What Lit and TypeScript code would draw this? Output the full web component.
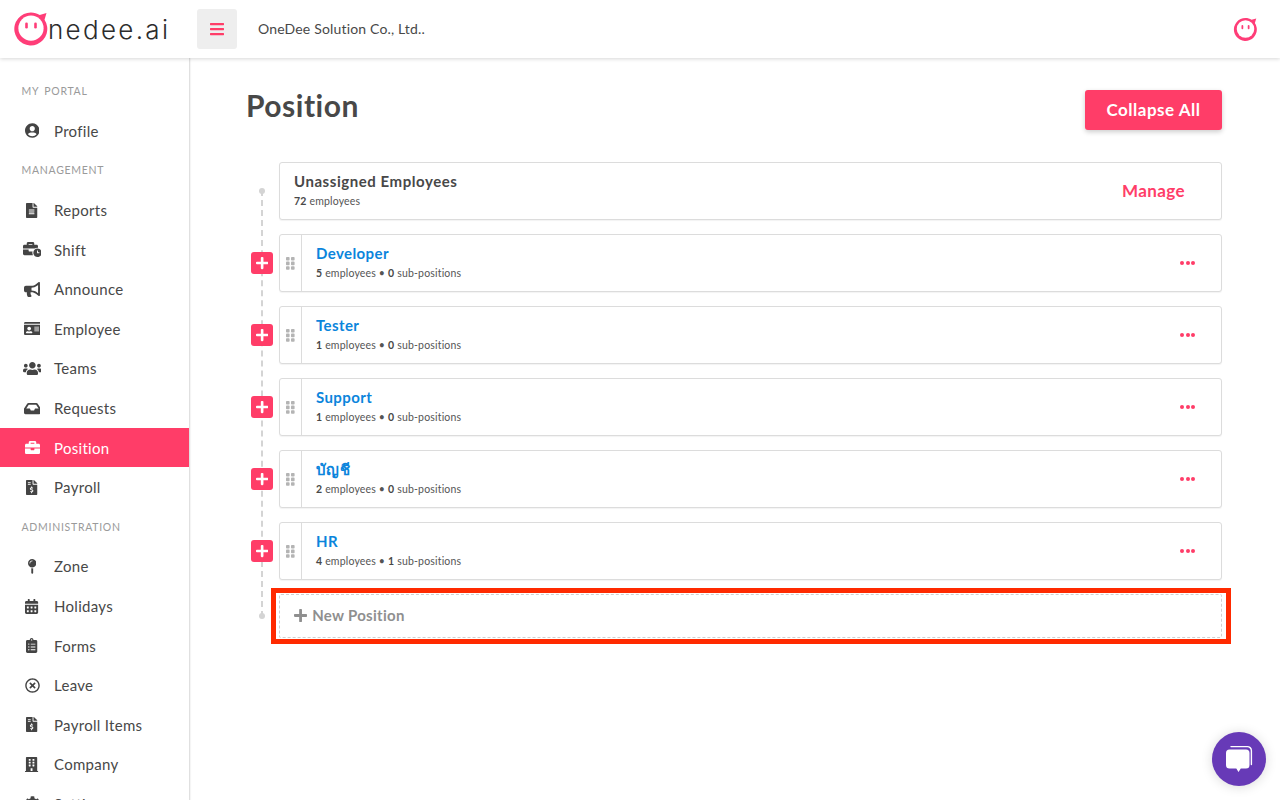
import { LitElement, html, css, svg } from "lit";
import { customElement } from "lit/decorators.js";

const I: Record<string, [number, string]> = {
  user: [496, "M248 8C111 8 0 119 0 256s111 248 248 248 248-111 248-248S385 8 248 8zm0 96c48.6 0 88 39.4 88 88s-39.4 88-88 88-88-39.4-88-88 39.4-88 88-88zm0 344c-58.7 0-111.3-26.6-146.5-68.2 18.8-35.4 55.6-59.8 98.5-59.8 2.4 0 4.8.4 7.1 1.1 13 4.2 26.6 6.9 40.9 6.9 14.3 0 28-2.7 40.9-6.9 2.3-.7 4.7-1.1 7.1-1.1 42.9 0 79.7 24.4 98.5 59.8C359.3 421.4 306.7 448 248 448z"],
  file: [384, "M224 136V0H24C10.7 0 0 10.7 0 24v464c0 13.3 10.7 24 24 24h336c13.3 0 24-10.7 24-24V160H248c-13.2 0-24-10.8-24-24zm64 236c0 6.6-5.4 12-12 12H108c-6.6 0-12-5.4-12-12v-8c0-6.6 5.4-12 12-12h168c6.6 0 12 5.4 12 12v8zm0-64c0 6.6-5.4 12-12 12H108c-6.6 0-12-5.4-12-12v-8c0-6.6 5.4-12 12-12h168c6.6 0 12 5.4 12 12v8zm0-72v8c0 6.6-5.4 12-12 12H108c-6.6 0-12-5.4-12-12v-8c0-6.6 5.4-12 12-12h168c6.6 0 12 5.4 12 12zm96-114.1v6.1H256V0h6.1c6.4 0 12.5 2.5 17 7l97.9 98c4.5 4.5 7 10.6 7 16.9z"],
  shift: [640, "M496 224c-79.59 0-144 64.41-144 144s64.41 144 144 144 144-64.41 144-144-64.41-144-144-144zm64 150.29c0 5.34-4.37 9.71-9.71 9.71h-60.57c-5.34 0-9.71-4.37-9.71-9.71v-76.57c0-5.34 4.37-9.71 9.71-9.71h12.57c5.34 0 9.71 4.37 9.71 9.71V352h38.29c5.34 0 9.71 4.37 9.71 9.71v12.58zM496 192c5.4 0 10.72.33 16 .81V144c0-25.6-22.4-48-48-48h-80V48c0-25.6-22.4-48-48-48H176c-25.6 0-48 22.4-48 48v48H48c-25.6 0-48 22.4-48 48v80h395.12c28.6-20.09 63.35-32 100.88-32zM320 96H192V64h128v32zm6.82 224H208c-8.84 0-16-7.16-16-16v-48H0v144c0 25.6 22.4 48 48 48h291.43C327.1 423.96 320 396.82 320 368c0-16.66 2.48-32.72 6.82-48z"],
  horn: [576, "M576 240c0-23.63-12.95-44.04-32-55.12V32.01C544 23.26 537.02 0 512 0c-7.12 0-14.19 2.38-19.98 7.02l-85.03 68.03C364.28 109.19 310.66 128 256 128H64c-35.35 0-64 28.65-64 64v96c0 35.35 28.65 64 64 64h33.7c-1.39 10.48-2.18 21.14-2.18 32 0 39.77 9.26 77.35 25.56 110.94 5.19 10.69 16.52 17.06 28.4 17.06h74.28c26.05 0 41.69-29.84 25.9-50.56-16.4-21.52-26.15-48.36-26.15-77.44 0-11.11 1.62-21.79 4.41-32H256c54.66 0 108.28 18.81 150.98 52.95l85.03 68.03a32.023 32.023 0 0 0 19.98 7.02c24.92 0 32-22.78 32-32V295.13C563.05 284.04 576 263.63 576 240zm-96 141.42l-33.05-26.44C392.95 311.78 325.12 288 256 288v-96c69.12 0 136.95-23.78 190.95-66.98L480 98.58v282.84z"],
  idcard: [576, "M528 32H48C21.5 32 0 53.5 0 80v16h576V80c0-26.5-21.5-48-48-48zM0 432c0 26.5 21.5 48 48 48h480c26.5 0 48-21.5 48-48V128H0v304zm352-232c0-4.4 3.6-8 8-8h144c4.4 0 8 3.6 8 8v16c0 4.4-3.6 8-8 8H360c-4.4 0-8-3.6-8-8v-16zm0 64c0-4.4 3.6-8 8-8h144c4.4 0 8 3.6 8 8v16c0 4.4-3.6 8-8 8H360c-4.4 0-8-3.6-8-8v-16zm0 64c0-4.4 3.6-8 8-8h144c4.4 0 8 3.6 8 8v16c0 4.4-3.6 8-8 8H360c-4.4 0-8-3.6-8-8v-16zM176 192c35.3 0 64 28.7 64 64s-28.7 64-64 64-64-28.7-64-64 28.7-64 64-64zM67.1 396.2C75.5 370.5 99.6 352 128 352h8.2c12.3 5.1 25.7 8 39.8 8s27.6-2.9 39.8-8h8.2c28.4 0 52.5 18.5 60.9 44.2 3.2 9.9-5.2 19.8-15.6 19.8H82.7c-10.4 0-18.8-10-15.6-19.8z"],
  users: [640, "M96 224c35.3 0 64-28.7 64-64s-28.7-64-64-64-64 28.7-64 64 28.7 64 64 64zm448 0c35.3 0 64-28.7 64-64s-28.7-64-64-64-64 28.7-64 64 28.7 64 64 64zm32 32h-64c-17.6 0-33.5 7.1-45.1 18.6 40.3 22.1 68.9 62 75.1 109.4h66c17.7 0 32-14.3 32-32v-32c0-35.3-28.7-64-64-64zm-256 0c61.9 0 112-50.1 112-112S381.9 32 320 32 208 82.1 208 144s50.1 112 112 112zm76.8 32h-8.3c-20.8 10-43.9 16-68.5 16s-47.6-6-68.5-16h-8.3C179.6 288 128 339.6 128 403.2V432c0 26.5 21.5 48 48 48h288c26.5 0 48-21.5 48-48v-28.8c0-63.6-51.6-115.2-115.2-115.2zm-223.7-13.4C161.5 263.1 145.6 256 128 256H64c-35.3 0-64 28.7-64 64v32c0 17.7 14.3 32 32 32h65.9c6.3-47.4 34.9-87.3 75.2-109.4z"],
  inbox: [576, "M567.938 243.908L462.25 85.374A48.003 48.003 0 0 0 422.311 64H153.689a48 48 0 0 0-39.938 21.374L8.062 243.908A47.994 47.994 0 0 0 0 270.533V400c0 26.51 21.49 48 48 48h480c26.51 0 48-21.49 48-48V270.533a47.994 47.994 0 0 0-8.062-26.625zM162.252 128h251.497l85.333 128H376l-32 64H232l-32-64H76.918l85.334-128z"],
  case: [512, "M320 336c0 8.84-7.16 16-16 16h-96c-8.84 0-16-7.16-16-16v-48H0v144c0 25.6 22.4 48 48 48h416c25.6 0 48-22.4 48-48V288H320v48zm144-208h-80V80c0-25.6-22.4-48-48-48H176c-25.6 0-48 22.4-48 48v48H48c-25.6 0-48 22.4-48 48v80h512v-80c0-25.6-22.4-48-48-48zm-144 0H192V96h128v32z"],
  invoice: [384, "M377 105L279.1 7c-4.5-4.5-10.6-7-17-7H256v128h128v-6.1c0-6.3-2.5-12.4-7-16.9zm-153 31V0H24C10.7 0 0 10.7 0 24v464c0 13.3 10.7 24 24 24h336c13.3 0 24-10.7 24-24V160H248c-13.2 0-24-10.8-24-24zM64 72c0-4.42 3.58-8 8-8h80c4.42 0 8 3.58 8 8v16c0 4.42-3.58 8-8 8H72c-4.42 0-8-3.58-8-8V72zm0 80v-16c0-4.42 3.58-8 8-8h80c4.42 0 8 3.58 8 8v16c0 4.42-3.58 8-8 8H72c-4.42 0-8-3.58-8-8zm144 263.88V440c0 4.42-3.58 8-8 8h-16c-4.42 0-8-3.58-8-8v-24.29c-11.29-.58-22.27-4.52-31.37-11.35-3.9-2.93-4.1-8.77-.57-12.14l11.75-11.21c2.77-2.64 6.89-2.76 10.13-.73 3.87 2.42 8.26 3.72 12.82 3.72h28.11c6.5 0 11.8-5.92 11.8-13.19 0-5.95-3.61-11.19-8.77-12.73l-45-13.5c-18.59-5.58-31.58-23.42-31.58-43.39 0-24.52 19.05-44.44 42.67-45.07V232c0-4.42 3.58-8 8-8h16c4.42 0 8 3.58 8 8v24.29c11.29.58 22.27 4.51 31.37 11.35 3.9 2.93 4.1 8.77.57 12.14l-11.75 11.21c-2.77 2.64-6.89 2.76-10.13.73-3.87-2.43-8.26-3.72-12.82-3.72h-28.11c-6.5 0-11.8 5.92-11.8 13.19 0 5.95 3.61 11.19 8.77 12.73l45 13.5c18.59 5.58 31.58 23.42 31.58 43.39 0 24.53-19.05 44.44-42.67 45.07z"],
  pin: [288, "M112 316.94v156.69l22.02 33.02c4.75 7.12 15.22 7.12 19.97 0L176 473.63V316.94c-10.39 1.92-21.06 3.06-32 3.06s-21.61-1.14-32-3.06zM144 0C64.47 0 0 64.47 0 144s64.47 144 144 144 144-64.47 144-144S223.53 0 144 0zm0 76c-37.5 0-68 30.5-68 68 0 6.62-5.38 12-12 12s-12-5.38-12-12c0-50.73 41.28-92 92-92 6.62 0 12 5.38 12 12s-5.38 12-12 12z"],
  cal: [448, "M0 464c0 26.5 21.5 48 48 48h352c26.5 0 48-21.5 48-48V192H0v272zm320-196c0-6.6 5.4-12 12-12h40c6.6 0 12 5.4 12 12v40c0 6.6-5.4 12-12 12h-40c-6.6 0-12-5.4-12-12v-40zm0 128c0-6.6 5.4-12 12-12h40c6.6 0 12 5.4 12 12v40c0 6.6-5.4 12-12 12h-40c-6.6 0-12-5.4-12-12v-40zM192 268c0-6.6 5.4-12 12-12h40c6.6 0 12 5.4 12 12v40c0 6.6-5.4 12-12 12h-40c-6.6 0-12-5.4-12-12v-40zm0 128c0-6.6 5.4-12 12-12h40c6.6 0 12 5.4 12 12v40c0 6.6-5.4 12-12 12h-40c-6.6 0-12-5.4-12-12v-40zM64 268c0-6.6 5.4-12 12-12h40c6.6 0 12 5.4 12 12v40c0 6.6-5.4 12-12 12H76c-6.6 0-12-5.4-12-12v-40zm0 128c0-6.6 5.4-12 12-12h40c6.6 0 12 5.4 12 12v40c0 6.6-5.4 12-12 12H76c-6.6 0-12-5.4-12-12v-40zM400 64h-48V16c0-8.8-7.2-16-16-16h-32c-8.8 0-16 7.2-16 16v48H160V16c0-8.8-7.2-16-16-16h-32c-8.8 0-16 7.2-16 16v48H48C21.5 64 0 85.5 0 112v48h448v-48c0-26.5-21.5-48-48-48z"],
  clip: [384, "M336 64h-80c0-35.3-28.7-64-64-64s-64 28.7-64 64H48C21.5 64 0 85.5 0 112v352c0 26.5 21.5 48 48 48h288c26.5 0 48-21.5 48-48V112c0-26.5-21.5-48-48-48zM96 424c-13.3 0-24-10.7-24-24s10.7-24 24-24 24 10.7 24 24-10.7 24-24 24zm0-96c-13.3 0-24-10.7-24-24s10.7-24 24-24 24 10.7 24 24-10.7 24-24 24zm0-96c-13.3 0-24-10.7-24-24s10.7-24 24-24 24 10.7 24 24-10.7 24-24 24zm96-192c13.3 0 24 10.7 24 24s-10.7 24-24 24-24-10.7-24-24 10.7-24 24-24zm128 368c0 4.4-3.6 8-8 8H168c-4.4 0-8-3.6-8-8v-16c0-4.4 3.6-8 8-8h144c4.4 0 8 3.6 8 8v16zm0-96c0 4.4-3.6 8-8 8H168c-4.4 0-8-3.6-8-8v-16c0-4.4 3.6-8 8-8h144c4.4 0 8 3.6 8 8v16zm0-96c0 4.4-3.6 8-8 8H168c-4.4 0-8-3.6-8-8v-16c0-4.4 3.6-8 8-8h144c4.4 0 8 3.6 8 8v16z"],
  times: [512, "M256 8C119 8 8 119 8 256s111 248 248 248 248-111 248-248S393 8 256 8zm0 448c-110.5 0-200-89.5-200-200S145.5 56 256 56s200 89.5 200 200-89.5 200-200 200zm101.8-262.2L295.6 256l62.2 62.2c4.7 4.7 4.7 12.3 0 17l-22.6 22.6c-4.7 4.7-12.3 4.7-17 0L256 295.6l-62.2 62.2c-4.7 4.7-12.3 4.7-17 0l-22.6-22.6c-4.7-4.7-4.7-12.3 0-17l62.2-62.2-62.2-62.2c-4.7-4.7-4.7-12.3 0-17l22.6-22.6c4.7-4.7 12.3-4.7 17 0l62.2 62.2 62.2-62.2c4.7-4.7 12.3-4.7 17 0l22.6 22.6c4.7 4.7 4.7 12.3 0 17z"],
  build: [448, "M436 480h-20V24c0-13.255-10.745-24-24-24H56C42.745 0 32 10.745 32 24v456H12c-6.627 0-12 5.373-12 12v20h448v-20c0-6.627-5.373-12-12-12zM128 76c0-6.627 5.373-12 12-12h40c6.627 0 12 5.373 12 12v40c0 6.627-5.373 12-12 12h-40c-6.627 0-12-5.373-12-12V76zm0 96c0-6.627 5.373-12 12-12h40c6.627 0 12 5.373 12 12v40c0 6.627-5.373 12-12 12h-40c-6.627 0-12-5.373-12-12v-40zm52 148h-40c-6.627 0-12-5.373-12-12v-40c0-6.627 5.373-12 12-12h40c6.627 0 12 5.373 12 12v40c0 6.627-5.373 12-12 12zm76 160h-64v-84c0-6.627 5.373-12 12-12h40c6.627 0 12 5.373 12 12v84zm64-172c0 6.627-5.373 12-12 12h-40c-6.627 0-12-5.373-12-12v-40c0-6.627 5.373-12 12-12h40c6.627 0 12 5.373 12 12v40zm0-96c0 6.627-5.373 12-12 12h-40c-6.627 0-12-5.373-12-12v-40c0-6.627 5.373-12 12-12h40c6.627 0 12 5.373 12 12v40zm0-96c0 6.627-5.373 12-12 12h-40c-6.627 0-12-5.373-12-12V76c0-6.627 5.373-12 12-12h40c6.627 0 12 5.373 12 12v40z"],
  cog: [512, "M487.4 315.7l-42.6-24.6c4.3-23.2 4.3-47 0-70.2l42.6-24.6c4.9-2.8 7.1-8.6 5.5-14-11.1-35.6-30-67.8-54.7-94.6-3.8-4.1-10-5.1-14.8-2.3L380.8 110c-17.9-15.4-38.5-27.3-60.8-35.1V25.8c0-5.6-3.9-10.5-9.4-11.7-36.7-8.2-74.3-7.8-109.2 0-5.5 1.2-9.4 6.1-9.4 11.7V75c-22.2 7.9-42.8 19.8-60.8 35.1L88.7 85.5c-4.9-2.8-11-1.9-14.8 2.3-24.7 26.7-43.6 58.9-54.7 94.6-1.7 5.4.6 11.2 5.5 14L67.3 221c-4.3 23.2-4.3 47 0 70.2l-42.6 24.6c-4.9 2.8-7.1 8.6-5.5 14 11.1 35.6 30 67.8 54.7 94.6 3.8 4.1 10 5.1 14.8 2.3l42.6-24.6c17.9 15.4 38.5 27.3 60.8 35.1v49.2c0 5.6 3.9 10.5 9.4 11.7 36.7 8.2 74.3 7.8 109.2 0 5.5-1.2 9.4-6.1 9.4-11.7v-49.2c22.2-7.9 42.8-19.8 60.8-35.1l42.6 24.6c4.9 2.8 11 1.9 14.8-2.3 24.7-26.7 43.6-58.9 54.7-94.6 1.5-5.5-.7-11.3-5.6-14.1zM256 336c-44.1 0-80-35.9-80-80s35.9-80 80-80 80 35.9 80 80-35.9 80-80 80z"],
  plus: [448, "M416 208H272V64c0-17.67-14.33-32-32-32h-32c-17.67 0-32 14.33-32 32v144H32c-17.67 0-32 14.33-32 32v32c0 17.67 14.33 32 32 32h144v144c0 17.67 14.33 32 32 32h32c17.67 0 32-14.33 32-32V304h144c17.67 0 32-14.33 32-32v-32c0-17.67-14.33-32-32-32z"],
  bars: [448, "M16 132h416c8.837 0 16-7.163 16-16V76c0-8.837-7.163-16-16-16H16C7.163 60 0 67.163 0 76v40c0 8.837 7.163 16 16 16zm0 160h416c8.837 0 16-7.163 16-16v-40c0-8.837-7.163-16-16-16H16c-8.837 0-16 7.163-16 16v40c0 8.837 7.163 16 16 16zm0 160h416c8.837 0 16-7.163 16-16v-40c0-8.837-7.163-16-16-16H16c-8.837 0-16 7.163-16 16v40c0 8.837 7.163 16 16 16z"],
};

const icon = (n: string, size: number) => {
  const [w, d] = I[n];
  return html`<svg width=${(w / 512) * size} height=${size} viewBox="0 0 ${w} 512" fill="currentColor">${svg`<path d=${d}></path>`}</svg>`;
};

type Row = { label: string; icon?: string; active?: boolean };
const NAV: Row[] = [
  { label: "MY PORTAL" },
  { label: "Profile", icon: "user" },
  { label: "MANAGEMENT" },
  { label: "Reports", icon: "file" },
  { label: "Shift", icon: "shift" },
  { label: "Announce", icon: "horn" },
  { label: "Employee", icon: "idcard" },
  { label: "Teams", icon: "users" },
  { label: "Requests", icon: "inbox" },
  { label: "Position", icon: "case", active: true },
  { label: "Payroll", icon: "invoice" },
  { label: "ADMINISTRATION" },
  { label: "Zone", icon: "pin" },
  { label: "Holidays", icon: "cal" },
  { label: "Forms", icon: "clip" },
  { label: "Leave", icon: "times" },
  { label: "Payroll Items", icon: "invoice" },
  { label: "Company", icon: "build" },
  { label: "Settings", icon: "cog" },
];

const POS = [
  ["Developer", 5, 0],
  ["Tester", 1, 0],
  ["Support", 1, 0],
  ["บัญชี", 2, 0],
  ["HR", 4, 1],
] as const;

const face = (size: number) => html`<svg width=${size} height=${size} viewBox="0 0 36 36">
  <path d="M18 1.5c3.2 0 6.2.9 8.7 2.5L33.5 2l-2 6.8A16.5 16.5 0 1 1 18 1.5z" fill="#ff3d78"></path>
  <circle cx="18" cy="17.2" r="12.6" fill="#fff"></circle>
  <rect x="12.2" y="11.5" width="2.6" height="6" rx="1.3" fill="#ff3d78"></rect>
  <rect x="21.2" y="11.5" width="2.6" height="6" rx="1.3" fill="#ff3d78"></rect>
</svg>`;

@customElement("app-root")
export class AppRoot extends LitElement {
  static styles = css`
    :host { display: block; width: 1280px; height: 800px; overflow: hidden; background: #fff; position: relative;
      font-family: "Lato", "Noto Sans", "Liberation Sans", sans-serif; color: #484848; }
    * { box-sizing: border-box; }
    .top { height: 58px; display: flex; align-items: center; background: #fff; box-shadow: 0 1px 4px rgba(0,0,0,.16); position: relative; z-index: 2; }
    .logo { width: 197px; padding-left: 13px; display: flex; align-items: center; }
    .logo .word { font-family: "Inter", sans-serif; font-weight: 300; font-size: 26px; letter-spacing: 2.3px; color: #2c2c2c; margin-left: -1px; line-height: 34px; margin-top: 1px; }
    .burger { width: 40px; height: 40px; border-radius: 3px; background: #eee; color: #ff3d68; display: flex; align-items: center; justify-content: center; }
    .org { margin-left: 21px; font-size: 14px; letter-spacing: .17px; color: #484848; flex: 1; padding-bottom: 2px; }
    .avatar { margin-right: 22px; display: flex; }
    .body { display: flex; height: 742px; }
    .side { width: 190px; flex: none; padding-top: 13.5px; border-right: 1px solid #e0e0e0; box-shadow: 1px 0 1px rgba(0,0,0,.04); overflow: hidden; }
    .row { height: 39.6px; display: flex; align-items: center; padding-left: 22px; font-size: 15px; letter-spacing: .3px; color: #484848; }
    .row.head { font-size: 10.5px; letter-spacing: .72px; word-spacing: 2px; color: #9a9a9a; padding-left: 21.5px; }
    .row .ic { width: 20px; margin-right: 12px; display: flex; justify-content: center; color: #444; flex: none; }
    .row.active { background: #ff3d68; color: #fff; }
    .row.active .ic { color: #fff; }
    .main { flex: 1; padding: 32px 58px 0 56px; }
    .title-row { display: flex; justify-content: space-between; align-items: flex-start; height: 72px; }
    h1 { margin: -3px 0 0; font-size: 30px; line-height: 36px; font-weight: 700; color: #484848; letter-spacing: .5px; }
    .collapse { width: 137px; height: 40px; padding: 0 0 2px; background: #ff3d68; color: #fff; border-radius: 3px; border: 0; font: inherit; font-size: 17px; font-weight: 700; letter-spacing: .5px; box-shadow: 0 2px 5px rgba(0,0,0,.2); }
    .tree { position: relative; padding-left: 33px; display: flex; flex-direction: column; gap: 14px; }
    .tree::before { content: ""; position: absolute; left: 15px; top: 28px; bottom: 21px; border-left: 2px dashed #d4d4d4; }
    .dot { position: absolute; left: 13px; width: 6px; height: 6px; border-radius: 50%; background: #d4d4d4; }
    .dot.a { top: 26px; }
    .dot.b { bottom: 19px; }
    .item { position: relative; }
    .card { height: 58px; border: 1px solid #dcdcdc; border-radius: 3px; background: #fff; display: flex; align-items: center; box-shadow: 0 1px 1px rgba(0,0,0,.05); }
    .un { padding: 0 36px 0 14px; justify-content: space-between; }
    .text { padding-bottom: 3px; }
    .name { font-size: 15px; line-height: 20px; font-weight: 700; letter-spacing: .55px; }
    .name.blue { letter-spacing: .4px; }
    .sub { font-size: 10.5px; line-height: 14px; margin-top: 3px; letter-spacing: .18px; color: #555; }
    .sub b { color: #484848; font-weight: 700; }
    .manage { font-size: 17px; font-weight: 700; color: #ff3d68; letter-spacing: .4px; padding-bottom: 2px; }
    .grip { width: 22px; height: 100%; border-right: 1px solid #dcdcdc; display: flex; align-items: center; justify-content: center; flex: none; }
    .grip svg { display: block; }
    .info { flex: 1; padding: 0 0 3px 14px; }
    .blue { color: #0b85dc; }
    .dots { margin-right: 26px; display: flex; gap: 1.5px; }
    .dots i { width: 4px; height: 4px; border-radius: 50%; background: #ff3d68; }
    .add { position: absolute; left: -28px; top: 18px; width: 22px; height: 22px; border-radius: 3px; background: #ff3d68; color: #fff; display: flex; align-items: center; justify-content: center; }
    .new { height: 43.5px; border: 1px dashed #d0d0d0; border-radius: 2px; display: flex; align-items: center; gap: 5px; padding: 0 0 1px 14px; color: #8f8f8f; font-size: 15px; font-weight: 700; letter-spacing: .3px; position: relative; }
    .mark { position: absolute; left: -9px; right: -10px; top: -7px; bottom: -7px; border: 5px solid #ff2a00; pointer-events: none; }
    .chat { position: absolute; right: 14px; bottom: 14px; width: 54px; height: 54px; border-radius: 50%; background: #673ab7; box-shadow: 0 1px 12px rgba(0,0,0,.15); display: flex; align-items: center; justify-content: center; }
  `;

  render() {
    return html`
      <div class="top">
        <div class="logo">${face(36)}<span class="word">nedee.ai</span></div>
        <div class="burger">${icon("bars", 16)}</div>
        <div class="org">OneDee Solution Co., Ltd..</div>
        <div class="avatar">${face(25)}</div>
      </div>
      <div class="body">
        <nav class="side">
          ${NAV.map((r) =>
            r.icon
              ? html`<div class="row ${r.active ? "active" : ""}"><span class="ic">${icon(r.icon, 15)}</span>${r.label}</div>`
              : html`<div class="row head">${r.label}</div>`
          )}
        </nav>
        <main class="main">
          <div class="title-row">
            <h1>Position</h1>
            <button class="collapse">Collapse All</button>
          </div>
          <div class="tree">
            <span class="dot a"></span><span class="dot b"></span>
            <div class="item">
              <div class="card un">
                <div class="text">
                  <div class="name">Unassigned Employees</div>
                  <div class="sub"><b>72</b> employees</div>
                </div>
                <div class="manage">Manage</div>
              </div>
            </div>
            ${POS.map(
              ([n, e, s]) => html`<div class="item">
                <div class="add">${icon("plus", 14)}</div>
                <div class="card">
                  <div class="grip">
                    <svg width="9" height="13" viewBox="0 0 9 13" fill="#b4b4b4">
                      <rect width="3.6" height="3.6" rx=".8"></rect><rect x="5" width="3.6" height="3.6" rx=".8"></rect>
                      <rect y="4.6" width="3.6" height="3.6" rx=".8"></rect><rect x="5" y="4.6" width="3.6" height="3.6" rx=".8"></rect>
                      <rect y="9.2" width="3.6" height="3.6" rx=".8"></rect><rect x="5" y="9.2" width="3.6" height="3.6" rx=".8"></rect>
                    </svg>
                  </div>
                  <div class="info">
                    <div class="name blue">${n}</div>
                    <div class="sub"><b>${e}</b> employees • <b>${s}</b> sub-positions</div>
                  </div>
                  <div class="dots"><i></i><i></i><i></i></div>
                </div>
              </div>`
            )}
            <div class="new">
              ${icon("plus", 15)}New Position
              <div class="mark"></div>
            </div>
          </div>
        </main>
      </div>
      <div class="chat">
        <svg width="28" height="28" viewBox="0 0 28 28">
          <path d="M6 1.6h16a4 4 0 0 1 4.4 4v14" fill="none" stroke="#fff" stroke-width="1.4" stroke-linecap="round"></path>
          <path d="M4.5 4.5h16.5a3.5 3.5 0 0 1 3.5 3.5v12a3.5 3.5 0 0 1-3.5 3.5h-5.2L13.5 27l-2.2-3.5H4.5A3.5 3.5 0 0 1 1 20V8a3.5 3.5 0 0 1 3.5-3.5z" fill="#fff"></path>
        </svg>
      </div>
    `;
  }
}
